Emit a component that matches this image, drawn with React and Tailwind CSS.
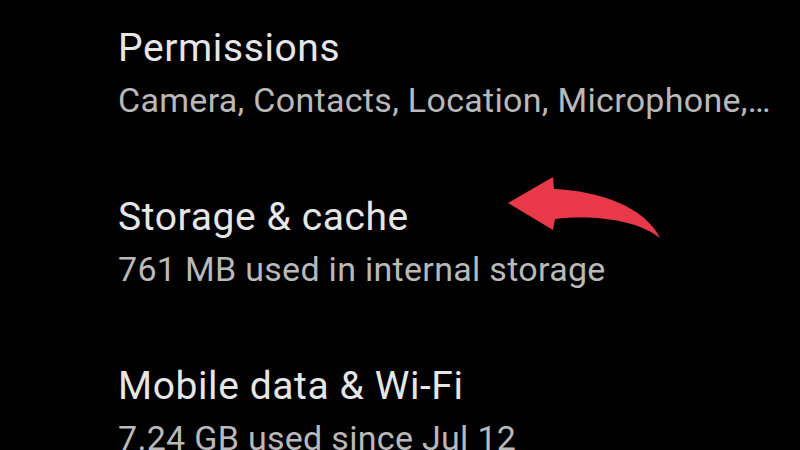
export default function App() {
  const rows = [
    { title: "Permissions", sub: "Camera, Contacts, Location, Microphone,…" },
    { title: "Storage & cache", sub: "761 MB used in internal storage" },
    { title: "Mobile data & Wi-Fi", sub: "7.24 GB used since Jul 12" },
  ];

  return (
    <div
      className="relative w-[800px] h-[450px] overflow-hidden bg-black"
      style={{ fontFamily: "Roboto, 'Noto Sans', sans-serif" }}
    >
      <div className="flex flex-col gap-[75px] pl-[118px] pt-[26px]">
        {rows.map((r) => (
          <div key={r.title} className="flex flex-col">
            <div className="text-[39px] leading-[44px] tracking-[0.6px] text-[#e6e6e6] whitespace-nowrap">
              {r.title}
            </div>
            <div className="mt-[10px] text-[34px] leading-[40px] tracking-[0.3px] text-[#b9b9b9] whitespace-nowrap">
              {r.sub}
            </div>
          </div>
        ))}
      </div>

      <svg
        className="absolute left-0 top-0"
        width="800"
        height="450"
        viewBox="0 0 800 450"
      >
        <path
          d="M508 203 L553 177 L554 189 C600 191 645 207 660 238 C640 222 600 214 555 219 L553 230 Z"
          fill="#e8384a"
        />
      </svg>
    </div>
  );
}
